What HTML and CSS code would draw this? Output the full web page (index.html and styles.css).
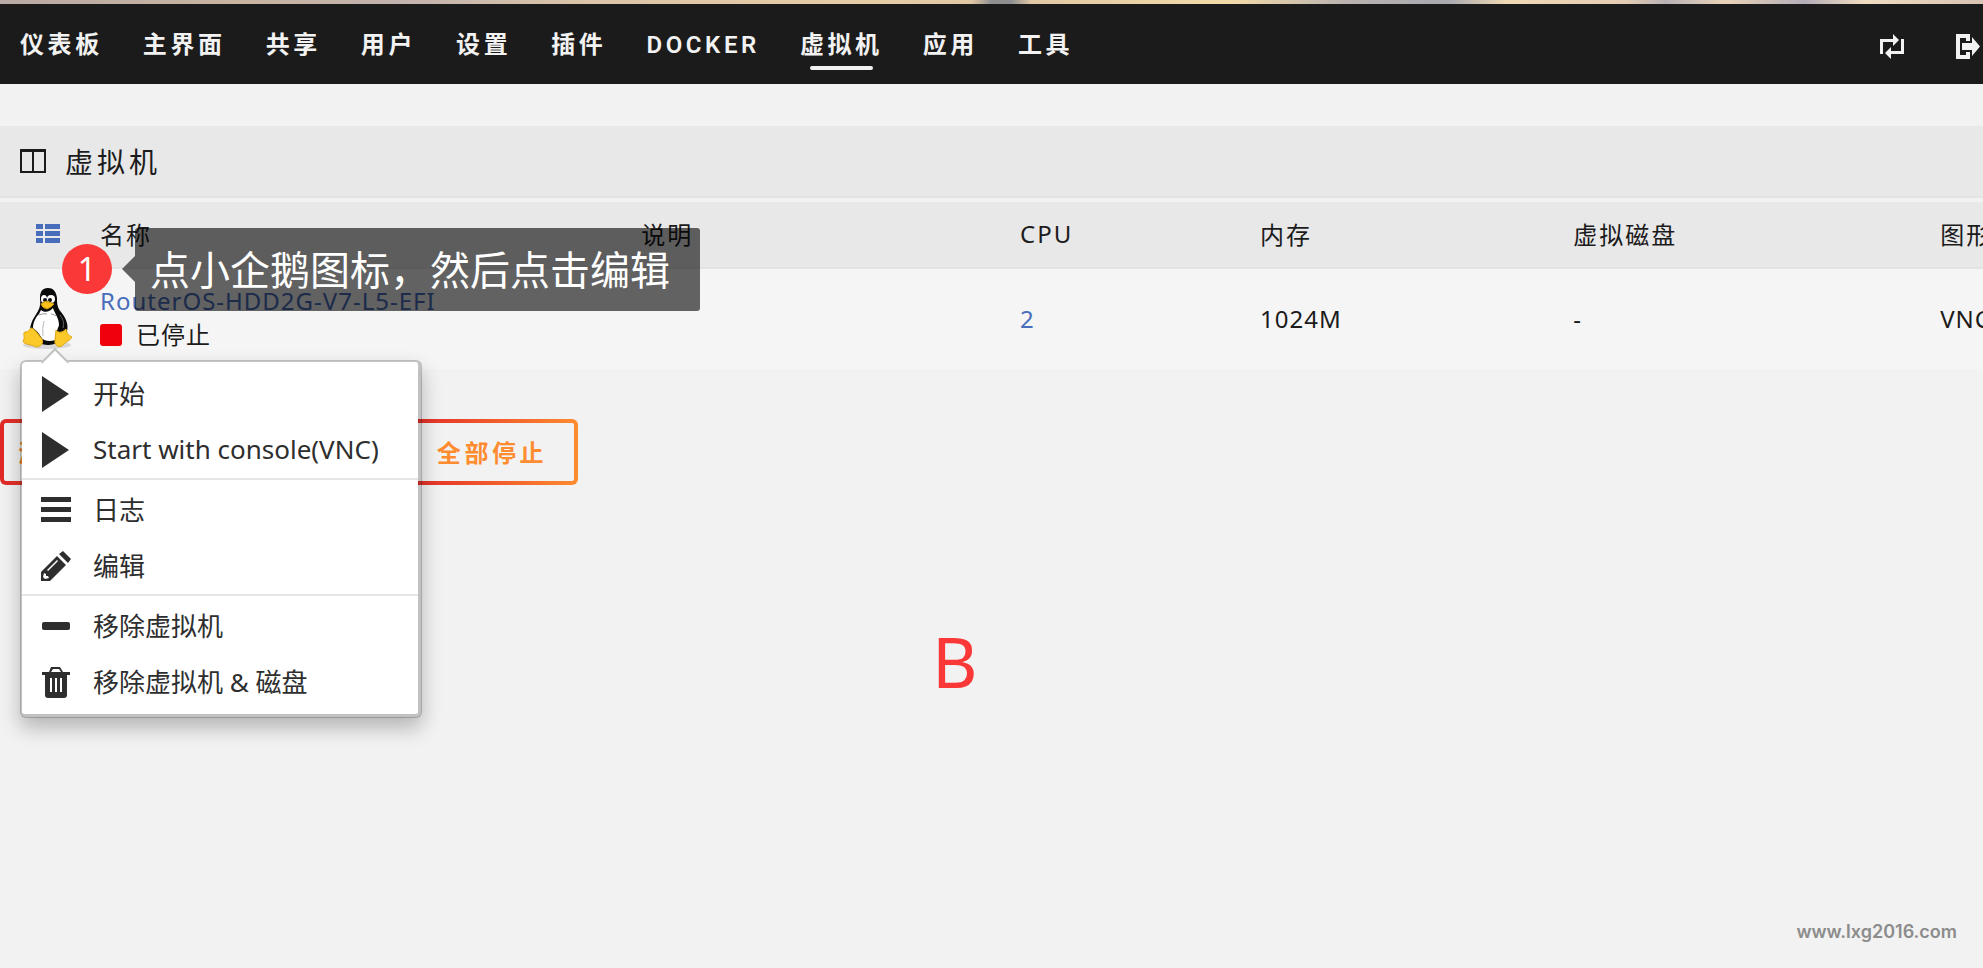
FILE: index.html
```html
<!DOCTYPE html>
<html lang="zh-CN">
<head>
    <meta charset="UTF-8">
    <title>虚拟机</title>
    <link rel="stylesheet" href="styles.css">
</head>
<body>
    <div class="banner"></div>
    <nav class="menu">
        <a href="#">仪表板</a>
        <a href="#">主界面</a>
        <a href="#">共享</a>
        <a href="#">用户</a>
        <a href="#">设置</a>
        <a href="#">插件</a>
        <a href="#">DOCKER</a>
        <a href="#" class="active">虚拟机</a>
        <a href="#">应用</a>
        <a href="#">工具</a>
        <div class="tools">
            <button type="button" aria-label="切换">
                <svg width="25" height="26" viewBox="0 0 25 26" fill="#f2f2f2"><path d="M0 5H13V0L19 6L13 12V8H3V20H0ZM24 5V20H11V25L5 19L11 13V17H21V5Z"/></svg>
            </button>
            <button type="button" aria-label="退出">
                <svg width="25" height="26" viewBox="0 0 25 26" fill="#f2f2f2"><path d="M0 0H14V7H10V4H4V21H10V18H14V25H0Z"/><path d="M6 9H16V3L24 12.500L16 22V16H6Z"/></svg>
            </button>
        </div>
    </nav>

    <main>
        <h1 class="title">
            <svg width="26" height="26" viewBox="0 0 26 26"><path d="M1 2H25V24H1Z M13 2V24" fill="none" stroke="#1c1b1b" stroke-width="2"/><path d="M0 1H26V4H0Z" fill="#1c1b1b"/></svg>
            虚拟机
        </h1>

        <table class="vms">
            <colgroup>
                <col class="c-icon"><col class="c-name"><col class="c-desc"><col class="c-cpu"><col class="c-mem"><col class="c-disk"><col>
            </colgroup>
            <thead>
                <tr>
                    <th class="list"><svg width="24" height="19" viewBox="0 0 24 19" fill="#486dba"><path d="M0 0H7V5H0ZM9 0H24V5H9ZM0 7H7V12H0ZM9 7H24V12H9ZM0 14H7V19H0ZM9 14H24V19H9Z"/></svg></th>
                    <th>名称</th>
                    <th>说明</th>
                    <th>CPU</th>
                    <th>内存</th>
                    <th>虚拟磁盘</th>
                    <th>图形</th>
                </tr>
            </thead>
            <tbody>
                <tr>
                    <td class="icon">
                        <div class="vm">
                            <svg width="50" height="62" viewBox="0 0 50 62">
                                <ellipse cx="25" cy="58" rx="24" ry="4" fill="#000" opacity=".12"/>
                                <path d="M26 1C19 1 18 6 18 12C19 19 17 23 13 29C9 35 8 40 8 45C11 54 19 58 26 58C34 58 43 53 45 44C47 37 43 30 39 25C35 20 35 16 35 11C34 4 31 1 26 1Z" fill="#0a0a0a"/>
                                <path d="M19 23C22 26 28 25 31 21C33 27 37 31 37 38C36 42 34 44 33 53C28 55 21 54 19 50C17 46 14 43 11 41C11 35 14 30 17 27Z" fill="#fff"/>
                                <path d="M22 34Q20 41 21 49" fill="none" stroke="#bbb"/>
                                <path d="M17 28Q21 26 25 27M29 27Q32 27 34 29" fill="none" stroke="#999"/>
                                <path d="M38 28Q43 34 41 41" fill="none" stroke="#666"/>
                                <ellipse cx="22" cy="12" rx="3" ry="4" fill="#fff"/>
                                <ellipse cx="29" cy="12" rx="4" ry="4" fill="#fff"/>
                                <circle cx="23" cy="13" r="2" fill="#111"/>
                                <circle cx="28" cy="13" r="2" fill="#111"/>
                                <path d="M19 17Q23 13 27 15L32 17Q30 20 25 22Q20 21 19 17Z" fill="#f8c21a" stroke="#c8930b"/>
                                <path d="M10 41C7 41 8 45 3 45C0 46 4 50 1 54C2 58 9 57 14 60C19 60 22 56 20 52C17 49 14 43 10 41Z" fill="#fcc92b" stroke="#e0a818"/>
                                <path d="M34 43C37 47 41 45 44 42C45 46 46 48 50 50C48 54 43 55 40 59C36 61 32 58 33 53Z" fill="#fcc92b" stroke="#e0a818"/>
                            </svg>
                            <ul class="context">
                                <li><a href="#"><svg width="28" height="36" viewBox="0 0 28 36"><path d="M0 0L27 18L0 36Z"/></svg>开始</a></li>
                                <li><a href="#"><svg width="28" height="36" viewBox="0 0 28 36"><path d="M0 0L27 18L0 36Z"/></svg>Start with console(VNC)</a></li>
                                <li class="divided"><a href="#"><svg width="30" height="26" viewBox="0 0 30 26"><path d="M0 0H30V5H0ZM0 10H30V15H0ZM0 20H30V25H0Z"/></svg>日志</a></li>
                                <li><a href="#"><svg width="30" height="30" viewBox="0 0 30 30"><path fill-rule="evenodd" d="M22 0L30 8L27 12L18 3ZM16 5L25 14L9 30H0V21ZM3 22L2 26L4 28L8 27L7 25H5V23ZM16 9L6 19L7 20L17 10Z"/></svg>编辑</a></li>
                                <li class="divided"><a href="#"><svg width="28" height="8" viewBox="0 0 28 8"><rect width="28" height="8" rx="2"/></svg>移除虚拟机</a></li>
                                <li><a href="#"><svg width="28" height="31" viewBox="0 0 28 31"><path fill-rule="evenodd" d="M9 0H18L21 5H28V8H25V28Q25 31 22 31H6Q3 31 3 28V8H0V5H7ZM11 2L9 5H19L17 2ZM8 11V25H10V11ZM13 11V25H15V11ZM18 11V25H20V11Z"/></svg>移除虚拟机 &amp; 磁盘</a></li>
                            </ul>
                        </div>
                    </td>
                    <td class="name">
                        <a href="#">RouterOS-HDD2G-V7-L5-EFI</a>
                        <div class="state"><span class="stopped"></span>已停止</div>
                    </td>
                    <td></td>
                    <td><a href="#">2</a></td>
                    <td>1024M</td>
                    <td>-</td>
                    <td>VNC</td>
                </tr>
            </tbody>
        </table>

        <div class="buttons">
            <button type="button">添加虚拟机</button>
            <button type="button">全部启动</button>
            <button type="button">全部停止</button>
        </div>
    </main>

    <div class="step">1</div>
    <div class="tip">点小企鹅图标，然后点击编辑</div>
    <div class="mark">B</div>
    <div class="site">www.lxg2016.com</div>
</body>
</html>
```
FILE: styles.css
```css
* {
    box-sizing: border-box;
}
body {
    position: relative;
    margin: 0;
    min-height: 100vh;
    overflow: hidden;
    color: #1c1b1b;
    background: #f2f2f2;
    font-family: "Noto Sans", "Noto Sans CJK SC", sans-serif;
    font-size: 24px;
}
a {
    color: #486dba;
    text-decoration: none;
}
.banner {
    height: 4px;
    background: linear-gradient(90deg, #b9aaa5, #c9b4a0 12%, #c3b3ae 20%, #dcc5a8 30%, #e6cda6 44%, #e0c8a4 49%, #8f8f91 50%, #8f8f91 51%, #e0c8a4 52%, #f3dba8 62%, #b9b2b0 68%, #a9a9b0 73%, #f0d9b4 76%, #e4cdb4 82%, #b9b2b5 84%, #ead3b8 87%, #b3adb8 91%, #f0dcc0 94%, #d8c3b4);
}
.menu {
    display: flex;
    height: 80px;
    background: #1c1b1b;
}
.menu > a {
    position: relative;
    padding: 0 20px;
    color: #f2f2f2;
    font-family: Roboto, "Noto Sans CJK SC", sans-serif;
    font-weight: 600;
    letter-spacing: 0.15em;
    line-height: 82px;
    white-space: nowrap;
}
.menu .active::after {
    content: "";
    position: absolute;
    left: 30px;
    right: 30px;
    bottom: 14px;
    height: 4px;
    border-radius: 2px;
    background: #f2f2f2;
}
.tools {
    display: flex;
    align-items: center;
    gap: 51px;
    margin-left: auto;
    padding: 6px 2px 0 0;
}
.tools button {
    display: flex;
    padding: 0;
    border: 0;
    background: none;
}
.title {
    display: flex;
    align-items: center;
    gap: 19px;
    height: 72px;
    margin: 42px 0 4px;
    padding: 0 20px;
    border-bottom: 2px solid #e3e3e3;
    background: #e8e8e8;
    font-size: 28px;
    font-weight: normal;
    letter-spacing: 4px;
}
.vms {
    width: 100%;
    table-layout: fixed;
    border-spacing: 0;
    white-space: nowrap;
}
.c-icon { width: 100px; }
.c-name { width: 27.3%; }
.c-desc { width: 19.1%; }
.c-cpu { width: 12.1%; }
.c-mem { width: 15.8%; }
.c-disk { width: 18.5%; }
.vms th {
    height: 67px;
    padding: 0 0 2px;
    border-bottom: 2px solid #e3e3e3;
    background: #e8e8e8;
    font-weight: normal;
    letter-spacing: 2px;
    text-align: left;
}
.vms .list {
    padding-left: 36px;
}
.list svg {
    display: block;
}
.vms td {
    height: 100px;
    padding: 0 0 2px;
    background: #f5f5f5;
    letter-spacing: 1px;
}
.vms .icon {
    padding-left: 22px;
}
.vm {
    position: relative;
    width: 50px;
}
.vm > svg {
    display: block;
}
.name a, .state {
    display: block;
    line-height: 34px;
}
.state {
    display: flex;
    align-items: center;
    gap: 14px;
}
.stopped {
    width: 22px;
    height: 22px;
    border-radius: 3px;
    background: #f0000c;
}

/* menu opened from the VM icon */
.context {
    position: absolute;
    z-index: 1;
    top: 73px;
    left: -2px;
    width: 402px;
    margin: 0;
    padding: 4px 0;
    border: solid rgba(0, 0, 0, 0.2);
    border-width: 2px 4px 4px 2px;
    border-radius: 6px;
    background: #fff padding-box;
    box-shadow: 0 10px 20px rgba(0, 0, 0, 0.25);
    font-size: 26px;
    letter-spacing: 0;
    list-style: none;
}
.context::before {
    content: "";
    position: absolute;
    top: -10px;
    left: 23px;
    width: 18px;
    height: 18px;
    border: solid #c0c0c0;
    border-width: 2px 0 0 2px;
    background: #fff;
    transform: rotate(45deg);
}
.context a {
    position: relative;
    display: grid;
    grid-template-columns: 30px 1fr;
    align-items: center;
    gap: 22px;
    height: 56px;
    padding: 0 0 2px 19px;
    color: #2e2e2e;
}
.context svg {
    justify-self: center;
    margin-top: 2px;
    fill: #2e2e2e;
}
.context .divided {
    padding-top: 2px;
    border-top: 2px solid #e5e5e5;
}
.buttons {
    display: flex;
    gap: 30px;
    margin-top: 50px;
}
.buttons button {
    height: 66px;
    min-width: 172px;
    padding: 0 14px 2px;
    border: 4px solid transparent;
    border-radius: 6px;
    background: linear-gradient(#f2f2f2, #f2f2f2) padding-box, linear-gradient(90deg, #e22828, #ff8c2f) border-box;
    color: #ff8c2f;
    font: bold 24px "Noto Sans", "Noto Sans CJK SC", sans-serif;
    letter-spacing: 0.15em;
    white-space: nowrap;
}

/* notes laid over the page */
.step, .tip, .mark, .site {
    position: absolute;
    z-index: 2;
}
.step {
    top: 244px;
    left: 62px;
    width: 50px;
    height: 50px;
    border-radius: 50%;
    background: #fb3838;
    color: #fff;
    font-size: 32px;
    line-height: 50px;
    text-align: center;
}
.tip {
    top: 228px;
    left: 135px;
    height: 83px;
    padding: 0 30px 0 15px;
    border-radius: 3px;
    background: rgba(0, 0, 0, 0.6);
    color: #fff;
    font-size: 40px;
    line-height: 83px;
    white-space: nowrap;
}
.tip::before {
    content: "";
    position: absolute;
    top: 28px;
    right: 100%;
    border: solid transparent;
    border-width: 13px 13px 13px 0;
    border-right-color: rgba(0, 0, 0, 0.6);
}
.mark {
    top: 612px;
    left: 47%;
    color: #fb3838;
    font-size: 70px;
    line-height: 98px;
}
.site {
    right: 26px;
    bottom: 24px;
    color: #8c8c8c;
    font-family: Inter, sans-serif;
    font-size: 18px;
    font-weight: 600;
    line-height: 24px;
}
```
